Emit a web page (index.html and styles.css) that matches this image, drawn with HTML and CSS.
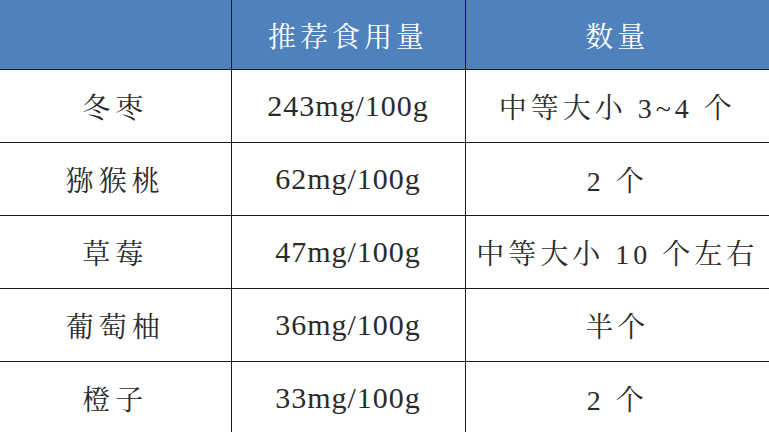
FILE: index.html
```html
<!DOCTYPE html>
<html lang="zh">
<head>
<meta charset="utf-8">
<link rel="stylesheet" href="styles.css">
</head>
<body>
<table class="vc-table">
  <colgroup>
    <col class="c1"><col class="c2"><col class="c3">
  </colgroup>
  <thead>
    <tr><th></th><th>推荐食用量</th><th>数量</th></tr>
  </thead>
  <tbody>
    <tr><td class="name">冬枣</td><td class="num">243mg/100g</td><td class="qty">中等大小 3~4 个</td></tr>
    <tr><td class="name">猕猴桃</td><td class="num">62mg/100g</td><td class="qty">2 个</td></tr>
    <tr><td class="name">草莓</td><td class="num">47mg/100g</td><td class="qty">中等大小 10 个左右</td></tr>
    <tr><td class="name">葡萄柚</td><td class="num">36mg/100g</td><td class="qty">半个</td></tr>
    <tr><td class="name">橙子</td><td class="num">33mg/100g</td><td class="qty">2 个</td></tr>
  </tbody>
</table>
</body>
</html>
```
FILE: styles.css
```css
html, body {
  margin: 0;
  padding: 0;
  background: #ffffff;
}
.vc-table {
  width: 769px;
  border-collapse: collapse;
  table-layout: fixed;
  font-family: "Liberation Serif", "Noto Serif CJK SC", "Noto Sans CJK SC", serif;
  color: #2b2b2b;
}
.c1 { width: 231px; }
.c2 { width: 234px; }
.c3 { width: 304px; }
.vc-table th {
  height: 69px;
  padding: 0;
  background: #4f81bd;
  color: #ffffff;
  font-family: "Noto Serif CJK SC", "Noto Sans CJK SC", sans-serif;
  font-weight: 400;
  font-size: 28px;
  letter-spacing: 4px;
  border-right: 1.5px solid #1a1a1a;
  border-bottom: 1.5px solid #1a1a1a;
}
.vc-table td {
  height: 72px;
  padding: 0;
  text-align: center;
  font-size: 28px;
  border-right: 1.5px solid #1a1a1a;
  border-bottom: 1.5px solid #1a1a1a;
}
.vc-table th:last-child,
.vc-table td:last-child {
  border-right: none;
}
.vc-table td.name {
  letter-spacing: 5px;
}
.vc-table td.num {
  font-size: 30px;
  letter-spacing: 1px;
}
.vc-table td.qty {
  letter-spacing: 4px;
}
```
